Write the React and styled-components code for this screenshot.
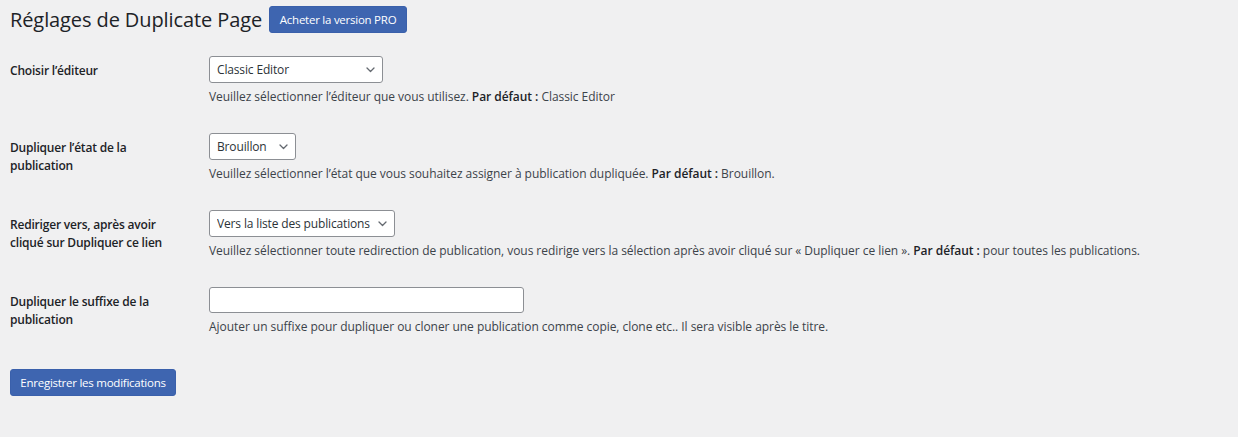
import React from 'react';
import styled, { createGlobalStyle } from 'styled-components';

const Global = createGlobalStyle`
  html, body { margin: 0; padding: 0; background: #f0f0f1; }
  body {
    font-family: "Open Sans", "Noto Sans", sans-serif;
    color: #1d2327;
    -webkit-font-smoothing: antialiased;
  }
  * { box-sizing: border-box; }
`;

const Wrap = styled.div`
  padding: 0 20px 0 10px;
  min-height: 437px;
`;

const Header = styled.div`
  display: flex;
  align-items: center;
  gap: 7px;
  height: 39px;
`;

const Title = styled.h1`
  margin: 0;
  font-size: 20px;
  font-weight: 400;
  letter-spacing: -0.1px;
  line-height: 27px;
  color: #1d2327;
`;

const Button = styled.button`
  display: inline-flex;
  align-items: center;
  justify-content: center;
  width: ${p => p.$w}px;
  height: 27px;
  padding: 0;
  border: 1px solid #3a60ab;
  border-radius: 3px;
  background: #3e65b0;
  color: #fff;
  font-family: inherit;
  font-size: 11.5px;
  letter-spacing: -0.25px;
  cursor: pointer;
`;

const Table = styled.div`
  padding-top: 4px;
`;

const Row = styled.div`
  display: grid;
  grid-template-columns: 199px 1fr;
  padding: 13px 0 14px;
`;

const Label = styled.div`
  padding-top: 6px;
  font-size: 12px;
  font-weight: 600;
  letter-spacing: -0.2px;
  line-height: 18px;
  color: #1d2327;
`;

const Field = styled.div`
  display: flex;
  flex-direction: column;
  align-items: flex-start;
`;

const SelectBox = styled.div`
  position: relative;
  width: ${p => p.$w}px;
  height: 27px;
`;

const Select = styled.select`
  appearance: none;
  -webkit-appearance: none;
  width: 100%;
  height: 100%;
  padding: 0 18px 0 7px;
  border: 1px solid #8c8f94;
  border-radius: 3px;
  background: #fff;
  color: #2c3338;
  font-family: inherit;
  font-size: 12px;
  letter-spacing: -0.15px;
`;

const Chevron = styled.svg`
  position: absolute;
  right: 8px;
  top: 11px;
  width: 9px;
  height: 6px;
  pointer-events: none;
`;

const TextInput = styled.input`
  width: ${p => p.$w}px;
  height: 26px;
  border: 1px solid #8c8f94;
  border-radius: 3px;
  background: #fff;
  padding: 0 8px;
  font-family: inherit;
  font-size: 12px;
`;

const Desc = styled.p`
  margin: 4px 0 0;
  font-size: 12px;
  line-height: 19px;
  letter-spacing: -0.05px;
  color: #3c434a;
  white-space: nowrap;

  b {
    font-weight: 600;
    color: #1d2327;
  }
`;

const Footer = styled.div`
  padding-top: 19px;
`;

const Dropdown = ({ w, value }) => (
  <SelectBox $w={w}>
    <Select defaultValue={value}>
      <option>{value}</option>
    </Select>
    <Chevron viewBox="0 0 9 6">
      <path d="M1 1l3.5 3.5L8 1" fill="none" stroke="#646970" strokeWidth="1.3" strokeLinecap="round" strokeLinejoin="round" />
    </Chevron>
  </SelectBox>
);

export default function App() {
  return (
    <Wrap>
      <Global />
      <Header>
        <Title>Réglages de Duplicate Page</Title>
        <Button $w={138}>Acheter la version PRO</Button>
      </Header>
      <Table>
        <Row>
          <Label>Choisir l’éditeur</Label>
          <Field>
            <Dropdown w={174} value="Classic Editor" />
            <Desc>Veuillez sélectionner l’éditeur que vous utilisez. <b>Par défaut :</b> Classic Editor</Desc>
          </Field>
        </Row>
        <Row>
          <Label>Dupliquer l’état de la<br />publication</Label>
          <Field>
            <Dropdown w={87} value="Brouillon" />
            <Desc>Veuillez sélectionner l’état que vous souhaitez assigner à publication dupliquée. <b>Par défaut :</b> Brouillon.</Desc>
          </Field>
        </Row>
        <Row>
          <Label>Rediriger vers, après avoir<br />cliqué sur Dupliquer ce lien</Label>
          <Field>
            <Dropdown w={186} value="Vers la liste des publications" />
            <Desc>Veuillez sélectionner toute redirection de publication, vous redirige vers la sélection après avoir cliqué sur « Dupliquer ce lien ». <b>Par défaut :</b> pour toutes les publications.</Desc>
          </Field>
        </Row>
        <Row>
          <Label>Dupliquer le suffixe de la<br />publication</Label>
          <Field>
            <TextInput $w={315} type="text" />
            <Desc>Ajouter un suffixe pour dupliquer ou cloner une publication comme copie, clone etc.. Il sera visible après le titre.</Desc>
          </Field>
        </Row>
      </Table>
      <Footer>
        <Button $w={166}>Enregistrer les modifications</Button>
      </Footer>
    </Wrap>
  );
}
